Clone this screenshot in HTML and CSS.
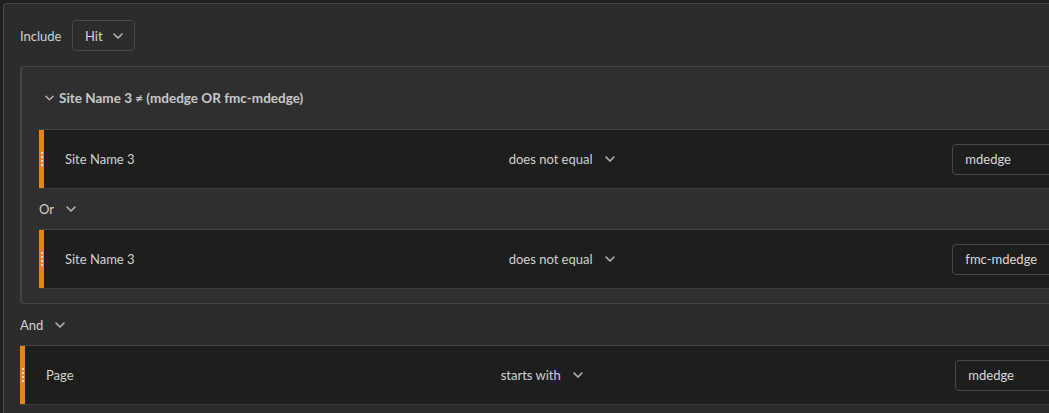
FILE: index.html
```html
<!DOCTYPE html>
<html>
<head>
<meta charset="utf-8">
<link rel="stylesheet" href="styles.css">
</head>
<body>
<div class="viewport">
<div class="panel">
  <div class="include-row">
    <span class="label">Include</span>
    <button class="picker">Hit <svg class="chev" viewBox="0 0 10 6"><path d="M1 1l4 4 4-4"/></svg></button>
  </div>
  <div class="group">
    <div class="group-head">
      <svg class="chev head-chev" viewBox="0 0 10 6"><path d="M1 1l4 4 4-4"/></svg>
      <span>Site Name 3 ≠ (mdedge OR fmc-mdedge)</span>
    </div>
    <div class="rule">
      <div class="grip"><i></i><i></i><i></i><i></i></div>
      <div class="cols">
        <div class="col">Site Name 3</div>
        <div class="col op">does not equal <svg class="chev" viewBox="0 0 10 6"><path d="M1 1l4 4 4-4"/></svg></div>
        <div class="col"><div class="value">mdedge</div></div>
      </div>
    </div>
    <div class="conj conj-or">Or <svg class="chev" viewBox="0 0 10 6"><path d="M1 1l4 4 4-4"/></svg></div>
    <div class="rule">
      <div class="grip"><i></i><i></i><i></i><i></i></div>
      <div class="cols">
        <div class="col">Site Name 3</div>
        <div class="col op">does not equal <svg class="chev" viewBox="0 0 10 6"><path d="M1 1l4 4 4-4"/></svg></div>
        <div class="col"><div class="value">fmc-mdedge</div></div>
      </div>
    </div>
  </div>
  <div class="conj conj-and">And <svg class="chev" viewBox="0 0 10 6"><path d="M1 1l4 4 4-4"/></svg></div>
  <div class="rule">
    <div class="grip"><i></i><i></i><i></i><i></i></div>
    <div class="cols">
      <div class="col">Page</div>
      <div class="col op">starts with <svg class="chev" viewBox="0 0 10 6"><path d="M1 1l4 4 4-4"/></svg></div>
      <div class="col"><div class="value">mdedge</div></div>
    </div>
  </div>
</div>
</div>
</body>
</html>
```
FILE: styles.css
```css
html, body {
  margin: 0;
  padding: 0;
  background: #1f1f1f;
  overflow: hidden;
}
body {
  font-family: Lato, "Open Sans", sans-serif;
  font-size: 13px;
  color: #d2d2d2;
}
.viewport {
  width: 1049px;
  height: 413px;
  overflow: hidden;
}
.panel {
  margin: 3px 0 0 3px;
  width: 1444px;
  box-sizing: border-box;
  border-top: 1px solid #474747;
  border-left: 1px solid #474747;
  border-top-left-radius: 4px;
  background: #2c2c2c;
  padding: 16px 16px 10px 16px;
}
.include-row {
  display: flex;
  align-items: center;
  height: 31px;
}
.label {
  width: 52px;
}
.picker {
  display: flex;
  align-items: center;
  gap: 10px;
  height: 31px;
  box-sizing: border-box;
  width: 63px;
  padding: 0 0 0 12px;
  background: transparent;
  border: 1px solid #4a4a4a;
  border-radius: 4px;
  font: inherit;
  color: #d8d8d8;
}
.chev {
  width: 10px;
  height: 6px;
  fill: none;
  stroke: #b4b4b4;
  stroke-width: 1.6;
  stroke-linecap: round;
  stroke-linejoin: round;
}
.group {
  margin-top: 15px;
  border: 1px solid #444;
  border-left-width: 2px;
  border-right: none;
  border-radius: 4px 0 0 4px;
  background: #2f2f2f;
  padding: 0 14px 14px 17px;
}
.group-head {
  height: 62px;
  display: flex;
  align-items: center;
  gap: 5px;
  padding-left: 6px;
  font-weight: bold;
  font-size: 13.5px;
  color: #c8c8c8;
}
.head-chev {
  width: 9px;
}
.rule {
  display: flex;
  height: 60px;
  box-sizing: border-box;
  border-top: 1px solid #464646;
  border-bottom: 1px solid #3c3c3c;
  background: #1e1e1e;
}
.grip {
  width: 5px;
  background: #e68619;
  display: flex;
  flex-direction: column;
  align-items: center;
  justify-content: center;
  gap: 2px;
}
.grip i {
  display: block;
  width: 2px;
  height: 2px;
  background: #fbdcb4;
}
.cols {
  flex: 1;
  display: grid;
  grid-template-columns: 1fr 1fr 1fr;
  align-items: center;
  padding: 0 21px;
}
.col {
  display: flex;
  align-items: center;
}
.op {
  gap: 12px;
}
.value {
  flex: 1;
  height: 31px;
  box-sizing: border-box;
  border: 1px solid #4a4a4a;
  border-radius: 4px;
  display: flex;
  align-items: center;
  padding-left: 12px;
  color: #dadada;
}
.conj {
  display: flex;
  align-items: center;
  gap: 12px;
}
.conj-or {
  height: 40px;
}
.conj-and {
  height: 41px;
}
```
